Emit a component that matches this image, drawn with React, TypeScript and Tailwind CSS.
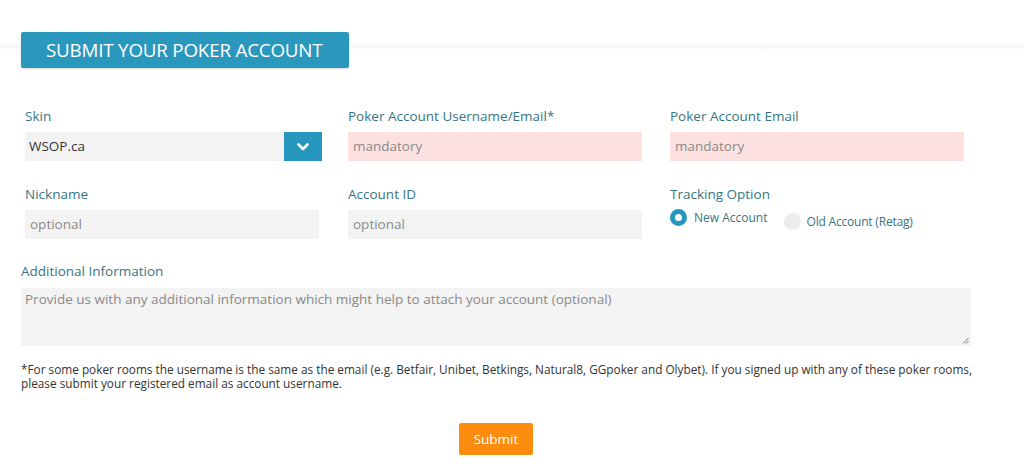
import React from 'react';

const font = { fontFamily: '"Open Sans", "Liberation Sans", sans-serif' };

const Label: React.FC<{ children: React.ReactNode; className?: string }> = ({ children, className = '' }) => (
  <div className={`text-[13.5px] leading-[20px] text-[#36767f] ${className}`}>{children}</div>
);

const Field: React.FC<{ placeholder: string; tone?: 'gray' | 'pink'; width: string }> = ({ placeholder, tone = 'gray', width }) => (
  <div
    className={`${width} h-[29px] flex items-center px-[5px] text-[13.5px] text-[#8a8a8a] ${
      tone === 'pink' ? 'bg-[#fde1e1]' : 'bg-[#f3f3f3]'
    }`}
  >
    {placeholder}
  </div>
);

export default function App() {
  return (
    <div className="w-[1024px] h-[475px] bg-white relative overflow-hidden" style={font}>
      {/* faint band behind the heading */}
      <div className="absolute left-0 right-0 top-[42px] h-[8px] bg-gradient-to-b from-white via-[#f4f4f4] to-white" />

      <div className="relative pt-[32px] pl-[21px]">
        <div className="w-[328px] h-[36px] bg-[#2a98bd] rounded-[2px] shadow-[0_1px_2px_rgba(0,0,0,0.15)] flex items-center pl-[25px] text-white text-[18.8px] tracking-[-0.2px]">
          SUBMIT YOUR POKER ACCOUNT
        </div>

        <div className="flex mt-[38px] pl-[4px]">
          <div className="w-[323px]">
            <Label>Skin</Label>
            <div className="mt-[6px] w-[297px] h-[29px] bg-[#f3f3f3] flex items-center">
              <span className="flex-1 pl-[4px] text-[13.5px] text-[#333]">WSOP.ca</span>
              <div className="w-[38px] h-[29px] bg-[#2596be] flex items-center justify-center">
                <svg width="12" height="8" viewBox="0 0 12 8">
                  <path d="M1.5 1.5 L6 6 L10.5 1.5" fill="none" stroke="white" strokeWidth="2.6" strokeLinecap="round" strokeLinejoin="round" />
                </svg>
              </div>
            </div>
          </div>
          <div className="w-[322px]">
            <Label>Poker Account Username/Email*</Label>
            <div className="mt-[6px]">
              <Field placeholder="mandatory" tone="pink" width="w-[294px]" />
            </div>
          </div>
          <div className="w-[300px]">
            <Label>Poker Account Email</Label>
            <div className="mt-[6px]">
              <Field placeholder="mandatory" tone="pink" width="w-[294px]" />
            </div>
          </div>
        </div>

        <div className="flex mt-[23px] pl-[4px]">
          <div className="w-[323px]">
            <Label>Nickname</Label>
            <div className="mt-[6px]">
              <Field placeholder="optional" width="w-[294px]" />
            </div>
          </div>
          <div className="w-[322px]">
            <Label>Account ID</Label>
            <div className="mt-[6px]">
              <Field placeholder="optional" width="w-[294px]" />
            </div>
          </div>
          <div className="w-[300px]">
            <Label>Tracking Option</Label>
            <div className="flex items-start mt-[5px] text-[12px] text-[#36767f]">
              <div className="flex items-center">
                <span className="w-[17px] h-[17px] rounded-full bg-[#2596be] flex items-center justify-center">
                  <span className="w-[7px] h-[7px] rounded-full bg-white" />
                </span>
                <span className="ml-[7px] leading-[17px]">New Account</span>
              </div>
              <div className="flex items-center ml-[16px] mt-[4px]">
                <span className="w-[17px] h-[17px] rounded-full bg-[#ececec]" />
                <span className="ml-[6px] leading-[17px] tracking-[-0.2px]">Old Account (Retag)</span>
              </div>
            </div>
          </div>
        </div>

        <Label className="mt-[22px]">Additional Information</Label>
        <div className="relative mt-[7px] w-[950px] h-[58px] bg-[#f3f3f3] px-[4px] pt-[1px] text-[13.5px] leading-[20px] text-[#8a8a8a]">
          Provide us with any additional information which might help to attach your account (optional)
          <svg className="absolute right-[2px] bottom-[2px]" width="7" height="7" viewBox="0 0 7 7">
            <path d="M6.5 1 L1 6.5 M6.5 4 L4 6.5" stroke="#777" strokeWidth="1" />
          </svg>
        </div>

        <p className="mt-[16px] w-[965px] text-[11.8px] leading-[14px] text-[#333]">
          *For some poker rooms the username is the same as the email (e.g. Betfair, Unibet, Betkings, Natural8, GGpoker and Olybet). If you signed up with any of these poker rooms, please submit your registered email as account username.
        </p>

        <div className="flex mt-[33px] pl-[438px]">
          <div className="w-[74px] h-[32px] bg-[#fb8c0e] rounded-[2px] flex items-center justify-center text-white text-[13.5px]">
            Submit
          </div>
        </div>
      </div>
    </div>
  );
}
